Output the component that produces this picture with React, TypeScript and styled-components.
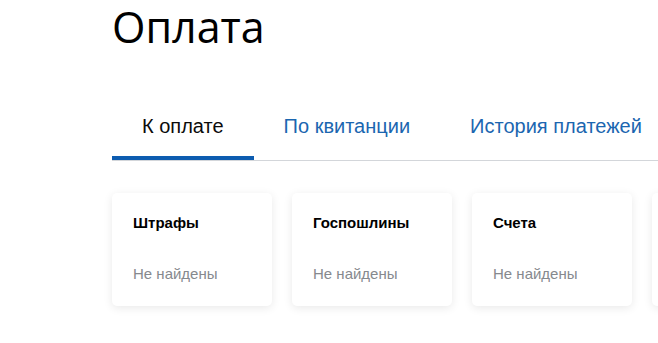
import React from 'react';
import styled, { createGlobalStyle } from 'styled-components';

const GlobalStyle = createGlobalStyle`
  html, body {
    margin: 0;
    padding: 0;
    background: #fff;
    overflow: hidden;
  }
  body {
    font-family: "Liberation Sans", Arial, sans-serif;
    color: #0b1f33;
  }
`;

const Page = styled.main`
  padding-left: 112px;
  width: 100%;
  box-sizing: border-box;
`;

const Title = styled.h1`
  margin: 0;
  font-family: "Open Sans", "Noto Sans", sans-serif;
  font-weight: 400;
  font-size: 43px;
  line-height: 54px;
  color: #000;
`;

const TabBar = styled.nav`
  display: flex;
  margin-top: 60px;
  border-bottom: 1px solid #d3d6da;
`;

const Tab = styled.button<{ $active?: boolean }>`
  flex-shrink: 0;
  padding: 0 30px 18px;
  border: 0;
  border-bottom: 4px solid ${(p) => (p.$active ? '#0d5cb0' : 'transparent')};
  background: none;
  font-family: inherit;
  font-size: 20px;
  line-height: 24px;
  color: ${(p) => (p.$active ? '#0b0b0b' : '#1b66b0')};
  cursor: pointer;
  white-space: nowrap;
`;

const CardRow = styled.section`
  display: flex;
  gap: 20px;
  margin-top: 32px;
  padding-bottom: 20px;
`;

const Card = styled.article`
  flex: 0 0 160px;
  height: 113px;
  box-sizing: border-box;
  padding: 20px 21px 0;
  border-radius: 5px;
  background: #fff;
  box-shadow: 0 2px 10px rgba(0, 0, 0, 0.09);
`;

const CardTitle = styled.h3`
  margin: 0;
  font-size: 15px;
  font-weight: 700;
  line-height: 20px;
  color: #000;
`;

const CardStatus = styled.p`
  margin: 31px 0 0;
  font-size: 15px;
  line-height: 20px;
  color: #86898e;
`;

const tabs = ['К оплате', 'По квитанции', 'История платежей'];
const cards = ['Штрафы', 'Госпошлины', 'Счета'];

export default function App() {
  return (
    <Page>
      <GlobalStyle />
      <Title>Оплата</Title>
      <TabBar>
        {tabs.map((t, i) => (
          <Tab key={t} $active={i === 0}>
            {t}
          </Tab>
        ))}
      </TabBar>
      <CardRow>
        {cards.map((c) => (
          <Card key={c}>
            <CardTitle>{c}</CardTitle>
            <CardStatus>Не найдены</CardStatus>
          </Card>
        ))}
        {/* next card only peeks in at the right edge */}
        <Card aria-hidden />
      </CardRow>
    </Page>
  );
}
